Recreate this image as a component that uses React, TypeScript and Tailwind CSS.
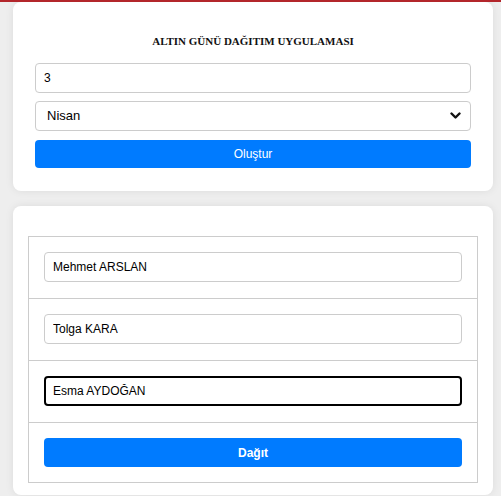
import React from 'react';

const names = ['Mehmet ARSLAN', 'Tolga KARA', 'Esma AYDOĞAN'];

const ChevronDown: React.FC = () => (
  <svg width="11" height="8" viewBox="0 0 11 8" className="pointer-events-none absolute right-[10px] top-1/2 -translate-y-1/2">
    <path d="M1.5 1.5 L5.5 5.5 L9.5 1.5" fill="none" stroke="#111" strokeWidth="2.4" strokeLinecap="round" strokeLinejoin="round" />
  </svg>
);

const App: React.FC = () => {
  return (
    <div className="h-screen overflow-hidden bg-[#eeeeee] border-t-2 border-[#b3262b] pl-[13px] pr-[8px] font-['Liberation_Sans',Arial,sans-serif]">
      {/* Form card */}
      <div className="rounded-lg bg-white px-[22px] pt-[32px] pb-[23px] shadow-[0_0_8px_rgba(0,0,0,0.08)]">
        <h1 className="text-center font-['Liberation_Serif',serif] text-[11px] font-bold leading-[14px] text-[#111]">
          ALTIN GÜNÜ DAĞITIM UYGULAMASI
        </h1>
        <input
          defaultValue="3"
          className="mt-[15px] block h-[30px] w-full rounded border border-[#cccccc] px-[8px] text-[12px] text-black outline-none"
        />
        <div className="relative mt-[8px]">
          <select
            defaultValue="Nisan"
            className="block h-[30px] w-full appearance-none rounded border border-[#cccccc] bg-white px-[11px] text-[13px] text-black outline-none"
          >
            <option>Ocak</option>
            <option>Şubat</option>
            <option>Mart</option>
            <option>Nisan</option>
            <option>Mayıs</option>
          </select>
          <ChevronDown />
        </div>
        <button className="mt-[9px] block h-[28px] w-full rounded bg-[#007bff] text-[12px] text-white">
          Oluştur
        </button>
      </div>

      {/* Distribution card */}
      <div className="mt-[15px] rounded-lg bg-white px-[15px] pt-[30px] pb-[12px] shadow-[0_0_8px_rgba(0,0,0,0.08)]">
        <div className="border border-[#cccccc]">
          {names.map((name, i) => (
            <div key={name} className="border-b border-[#cccccc] px-[15px] pt-[15px] pb-[16px]">
              <input
                defaultValue={name}
                className={
                  i === 2
                    ? 'block h-[30px] w-full rounded border-2 border-black px-[7px] text-[12px] text-black outline-none'
                    : 'block h-[30px] w-full rounded border border-[#cccccc] px-[8px] text-[12px] text-black outline-none'
                }
              />
            </div>
          ))}
          <div className="px-[15px] py-[15px]">
            <button className="block h-[29px] w-full rounded bg-[#007bff] text-[12px] font-bold text-white">
              Dağıt
            </button>
          </div>
        </div>
      </div>
    </div>
  );
};

export default App;
